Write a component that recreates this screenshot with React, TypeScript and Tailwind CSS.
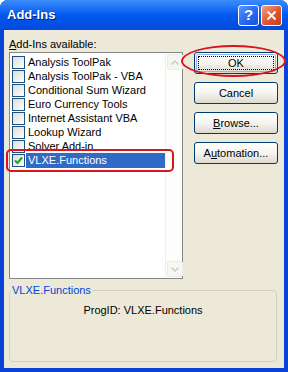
const items = [
  "Analysis ToolPak",
  "Analysis ToolPak - VBA",
  "Conditional Sum Wizard",
  "Euro Currency Tools",
  "Internet Assistant VBA",
  "Lookup Wizard",
  "Solver Add-in",
  "VLXE.Functions",
];

function CheckBox({ checked }: { checked?: boolean }) {
  return (
    <span className="w-[13px] h-[13px] shrink-0 border border-[#1c5180] bg-gradient-to-br from-[#dcdcd7] to-white flex items-center justify-center">
      {checked && (
        <svg width="9" height="9" viewBox="0 0 9 9">
          <path d="M1 4.5 L3.5 7 L8 1.5" fill="none" stroke="#21a121" strokeWidth="2" />
        </svg>
      )}
    </span>
  );
}

function ScrollArrow({ up }: { up?: boolean }) {
  return (
    <div className="w-[16px] h-[16px] rounded-[2px] border border-[#eeede5] bg-[#f7f7f2] flex items-center justify-center">
      <svg width="8" height="5" viewBox="0 0 8 5">
        <path d={up ? "M0.5 4.5 L4 1 L7.5 4.5" : "M0.5 0.5 L4 4 L7.5 0.5"} fill="none" stroke="#cdcbbd" strokeWidth="1.5" />
      </svg>
    </div>
  );
}

function XpButton({ children, isDefault }: { children: React.ReactNode; isDefault?: boolean }) {
  return (
    <div className="h-[22px] w-[84px] rounded-[3px] border border-[#003c74] bg-gradient-to-b from-white via-[#f5f4ef] to-[#dcdad0] flex items-center justify-center p-[1px]">
      <div
        className={
          isDefault
            ? "w-full h-full rounded-[2px] border border-[#98b4ee] flex items-center justify-center p-[1px]"
            : "w-full h-full flex items-center justify-center"
        }
      >
        <div className={isDefault ? "w-full h-full border border-dotted border-black flex items-center justify-center" : ""}>
          {children}
        </div>
      </div>
    </div>
  );
}

export default function App() {
  return (
    <div
      className="w-[288px] h-[372px] flex flex-col bg-[#0842d6] rounded-t-[8px] overflow-hidden text-[11px] leading-[14px] text-black"
      style={{ fontFamily: '"Liberation Sans", Arial, sans-serif' }}
    >
      {/* Title bar */}
      <div className="h-[30px] shrink-0 flex items-center justify-between pl-[7px] pr-[6px] bg-gradient-to-b from-[#3b8cfc] via-[#0058ee] to-[#0349dd]">
        <span className="text-white font-bold text-[13px] [text-shadow:1px_1px_0_#0a1e70]">Add-Ins</span>
        <div className="flex gap-[2px]">
          <div className="w-[21px] h-[21px] rounded-[3px] border border-white bg-gradient-to-br from-[#5c95ff] via-[#2a6cf2] to-[#1b52d8] flex items-center justify-center text-white font-bold text-[15px]">
            ?
          </div>
          <div className="w-[21px] h-[21px] rounded-[3px] border border-white bg-gradient-to-br from-[#f0a080] via-[#e25a34] to-[#c43a16] flex items-center justify-center">
            <svg width="11" height="11" viewBox="0 0 11 11">
              <path d="M1.5 1.5 L9.5 9.5 M9.5 1.5 L1.5 9.5" stroke="white" strokeWidth="2" />
            </svg>
          </div>
        </div>
      </div>

      {/* Client area */}
      <div className="flex-1 mx-[4px] mb-[4px] bg-[#ece9d8] pl-[5px] pr-[6px] pt-[7px] relative">
        <div>
          <span className="underline">A</span>dd-Ins available:
        </div>
        <div className="mt-[1px] flex gap-[11px]">
          {/* List box */}
          <div className="w-[174px] h-[227px] border border-[#868686] bg-white flex">
            <div className="flex-1 pt-[2px] pl-[2px]">
              {items.map((item, i) => {
                const selected = i === items.length - 1;
                return (
                  <div key={item} className="h-[14px] flex items-center">
                    <CheckBox checked={selected} />
                    <span
                      className={
                        selected
                          ? "ml-[1px] flex-1 h-[15px] bg-[#316ac5] text-white pl-[2px] flex items-center"
                          : "ml-[3px]"
                      }
                    >
                      {item}
                    </span>
                  </div>
                );
              })}
            </div>
            <div className="w-[17px] border-l border-[#f0efe8] bg-[#fdfdfb] flex flex-col justify-between p-[1px]">
              <ScrollArrow up />
              <ScrollArrow />
            </div>
          </div>

          {/* Buttons */}
          <div className="flex flex-col gap-[8px]">
            <XpButton isDefault>OK</XpButton>
            <XpButton>Cancel</XpButton>
            <XpButton>
              <span className="underline">B</span>rowse...
            </XpButton>
            <XpButton>
              A<span className="underline">u</span>tomation...
            </XpButton>
          </div>
        </div>

        {/* Group box */}
        <fieldset className="mt-[4px] w-[268px] h-[79px] border border-[#d0d0bf] rounded-[4px] px-0">
          <legend className="ml-[1px] px-[1px] text-[#0046d5]">VLXE.Functions</legend>
          <div className="text-center mt-[6px]">ProgID: VLXE.Functions</div>
        </fieldset>

        {/* Red annotations */}
        <div className="absolute left-[2px] top-[119px] w-[168px] h-[23px] border-2 border-[#d8141c] rounded-[5px]" />
        <div className="absolute left-[177px] top-[15px] w-[105px] h-[32px] border-2 border-[#d8141c] rounded-[50%]" />
      </div>
    </div>
  );
}
